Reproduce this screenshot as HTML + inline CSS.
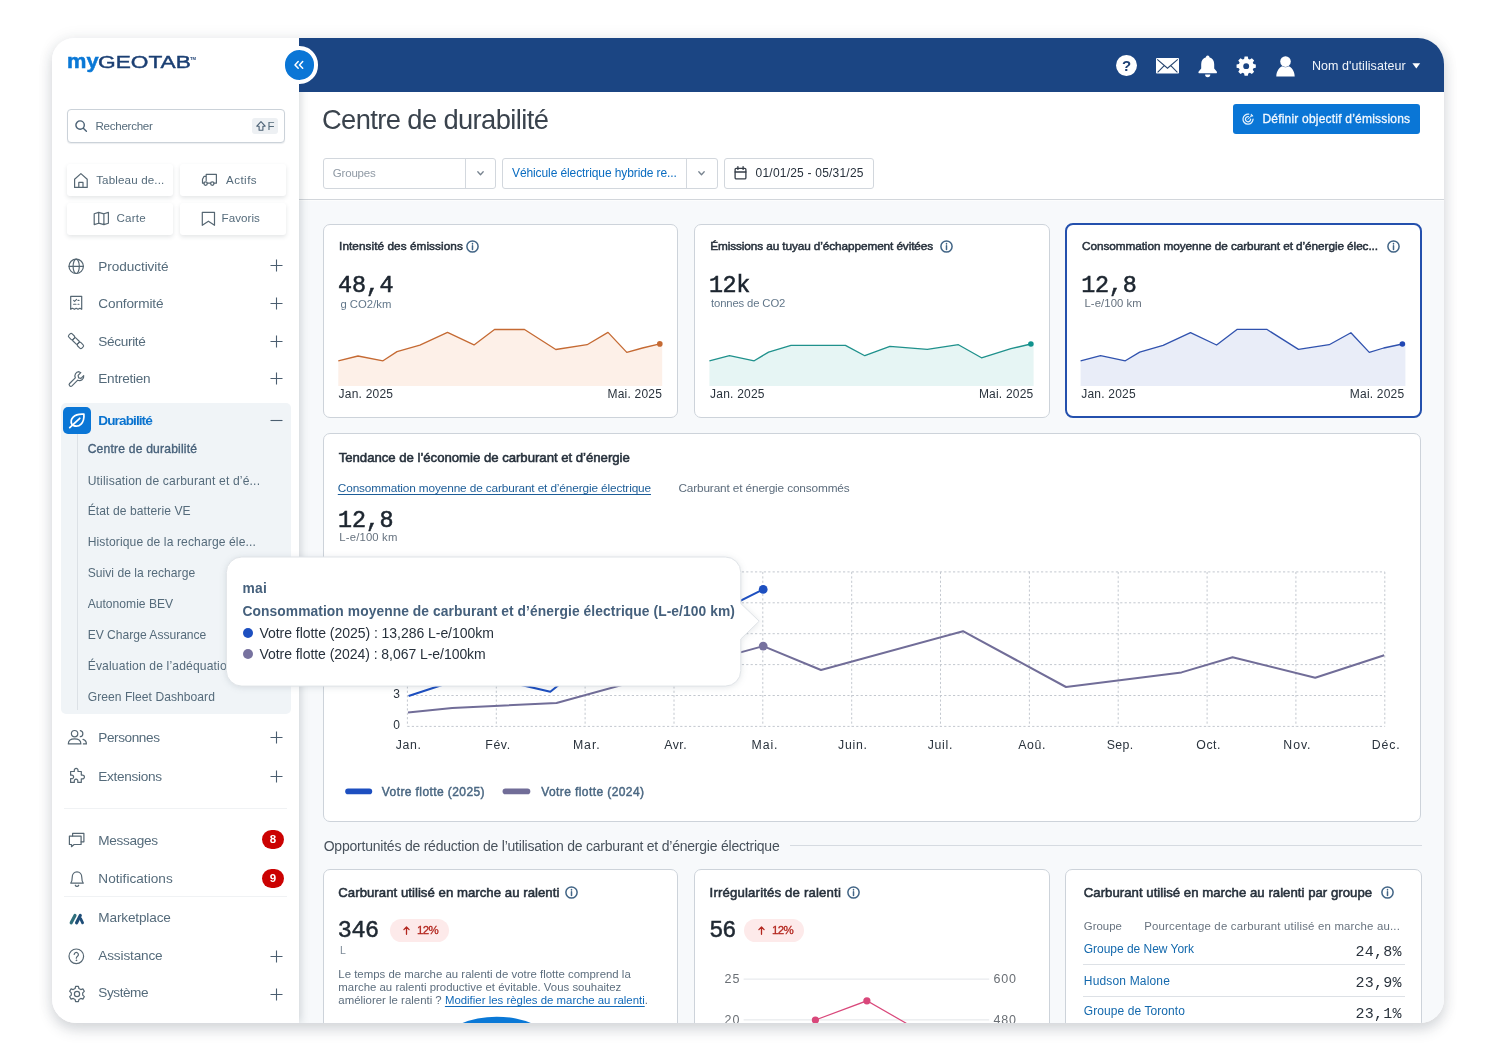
<!DOCTYPE html>
<html lang="fr">
<head>
<meta charset="utf-8">
<title>MyGeotab – Centre de durabilité</title>
<style>
*{box-sizing:border-box;margin:0;padding:0}
html,body{width:1496px;height:1059px;overflow:hidden;background:#fff}
body{font-family:"Liberation Sans",sans-serif;color:#2b3540;position:relative}
.shadow{position:absolute;left:52px;top:38px;width:1392px;height:985px;border-radius:22px 26px 24px 24px;background:#fff;
  box-shadow:0 7px 14px rgba(40,55,70,.17),0 0 16px rgba(40,55,70,.08)}
.frame{will-change:transform;overflow:hidden;position:absolute;left:0;top:0;width:1496px;height:1059px;clip-path:inset(38px 52px 36px 52px round 22px 26px 24px 24px)}
.abs,.t,.box{position:absolute}
.t{white-space:nowrap;line-height:1}
.mono{font-family:"Liberation Mono",monospace}
b,.b{font-weight:700}
svg{position:absolute;overflow:visible}
/* ---------- layout ---------- */
.content{left:299px;top:92px;width:1145px;height:931px;background:#f7f9fb}
.pagehead{left:299px;top:92px;width:1145px;height:108px;background:#fff;border-bottom:1px solid #d2d6db;box-shadow:0 1px 0 rgba(255,255,255,.6)}
.topbar{left:299px;top:38px;width:1145px;height:54px;background:#1b4583}
.sidebar{left:52px;top:38px;width:247px;height:985px;background:#fff;box-shadow:1px 0 9px rgba(40,60,70,.22)}
.c-muted{color:#556b7b}
.c-dark{color:#27313c}
.c-blue{color:#0071c6}
.card{background:#fff;border:1px solid #cdd3da;border-radius:7px}

/* ---------- sidebar ---------- */
.my{font-weight:700;color:#0a78d6;-webkit-text-stroke:.5px #0a78d6}
.geo{color:#1b3f73;-webkit-text-stroke:.4px #1b3f73}
.tm{font-weight:700;color:#1b3f73}
.search{border:1px solid #cbd2d9;border-radius:4px;background:#fff;box-shadow:0 1px 1px rgba(60,80,100,.10)}
.kbd{background:#edf0f3;border-radius:3px}
.qbtn{background:#fff;border-radius:3px;box-shadow:0 2px 4px rgba(50,60,70,.13)}
.ic{fill:none;stroke:#566773;stroke-width:1.2;stroke-linejoin:round;stroke-linecap:round}
.plus{fill:none;stroke:#4b5e70;stroke-width:1.1}
.navopen{background:#f0f4f7;border-radius:5px}
.navline{background:#dce1e6}
.leafbox{background:#0a76d6;border-radius:5px}
.navsep{height:1px;background:#f0f2f4}
.badge{width:22.4px;height:19px;border-radius:9.5px;background:#cb0202;color:#fff;font-weight:700;font-size:11.5px;line-height:19px;text-align:center}

/* ---------- top bar / page header ---------- */
.collapse{width:37.2px;height:37.2px;border-radius:50%;background:#0a76d6;border:4.6px solid #fff}
.title{font-weight:400;color:#3a434d}
.btn{background:#0a76d6;border-radius:3px}
.sel{background:#fff;border:1px solid #d2d7dd;border-radius:3px}
.sel i{position:absolute;top:0;bottom:0;width:1px;background:#d3d8de}
.chev{fill:none;stroke:#76828e;stroke-width:1.3;stroke-linecap:round;stroke-linejoin:round}

/* ---------- cards ---------- */
.ctitle{font-weight:400;color:#27313c;-webkit-text-stroke:.5px #27313c}
.info{fill:none;stroke:#426586;stroke-width:1.5;stroke-linecap:round}
.kpi{color:#1c252f;-webkit-text-stroke:.55px #1c252f}
.unit{color:#62778a}
.axis{color:#2a333d}
.sel3{border:2px solid #2450ad;border-radius:8px}

/* ---------- chart / bottom / tooltip ---------- */
.tab{color:#5c6c7c}
.tab.on{color:#1d5d98;text-decoration:underline;text-decoration-thickness:.8px;text-underline-offset:1.5px}
.unit2{color:#66727f}
.leg{color:#4a6782;-webkit-text-stroke:.45px #4a6782}
.sect{font-weight:400;color:#48525c}
.kpi2{color:#1f2832;-webkit-text-stroke:.5px #1f2832}
.pill{background:#fdeaea;border-radius:11.4px}
.up{fill:none;stroke:#b3261e;stroke-width:1.3;stroke-linecap:round;stroke-linejoin:round}
.pct{color:#b3261e;-webkit-text-stroke:.3px #b3261e}
.para{color:#5d6e7e}
.lnk{color:#1169b8;text-decoration:underline;text-decoration-thickness:.8px;text-underline-offset:1.5px}
.ax2{color:#6a6f75}
.th{color:#68737f}
.grp{color:#1469ad}
.val{color:#2a333d}
.hr{height:1px;background:#dde1e6}
.tt{color:#45607c}
.dot{width:10.2px;height:10.2px;border-radius:50%}
h2.ctitle,h3.ctitle{-webkit-text-stroke:.55px #27313c}
</style>
</head>
<body>
<div class="shadow"></div>
<div class="frame">
  <main class="box content"></main>
  <div class="box pagehead"></div>
  <nav class="box sidebar"></nav>
  <header class="box topbar"></header>
<!-- ================= SIDEBAR ================= -->
<span class="t my" style="left:67.2px;top:51px;font-size:20.6px;transform:scaleX(1.06);transform-origin:0 0">my</span>
<span class="t geo" style="left:98px;top:55px;font-size:15.8px;transform:scaleX(1.435);transform-origin:0 0">GEOTAB</span>
<span class="t tm" style="left:189.9px;top:57px;font-size:4.2px">TM</span>

<div class="box search" style="left:67px;top:109px;width:218px;height:34px"></div>
<svg style="left:73px;top:118px" width="16" height="16" viewBox="0 0 16 16" fill="none" stroke="#4a6175" stroke-width="1.4" stroke-linecap="round"><circle cx="7.1" cy="7.1" r="4.2"/><path d="M10.3 10.3 13.4 13.3"/></svg>
<span class="t c-muted" style="left:95.4px;top:120px;font-size:11.6px;letter-spacing:-0.27px">Rechercher</span>
<div class="box kbd" style="left:252px;top:118px;width:26px;height:16px"></div>
<svg style="left:255.6px;top:121px" width="10" height="10" viewBox="0 0 10 10" fill="none" stroke="#4b6074" stroke-width="1.1" stroke-linejoin="round"><path d="M5 .7 9.2 5.2H6.9V9.3H3.1V5.2H.8Z"/></svg>
<span class="t c-muted" style="left:267.4px;top:121px;font-size:11.5px">F</span>

<div class="box qbtn" style="left:67px;top:164px;width:106px;height:32px"></div>
<div class="box qbtn" style="left:179.5px;top:164px;width:106px;height:32px"></div>
<div class="box qbtn" style="left:67px;top:202.5px;width:106px;height:32px"></div>
<div class="box qbtn" style="left:179.5px;top:202.5px;width:106px;height:32px"></div>
<svg class="ic" style="left:72.8px;top:172px" width="16" height="17" viewBox="0 0 16 17"><path d="M1.6 15.4V7.2L7.9 1.6 14.2 7.2V15.4H1.6ZM5.8 15.4V10.4H10V15.4"/></svg>
<span class="t c-muted" style="left:96.2px;top:174px;font-size:11.6px;letter-spacing:0.14px">Tableau de...</span>
<svg class="ic" style="left:201px;top:173px" width="17" height="14" viewBox="0 0 17 14"><path d="M5.2 1.4H15.4V10.2H12.9M9.6 10.2H6.3M5.2 1.4V7.6M3 10.2H1.5V6.3L3.1 3.3H5.2"/><circle cx="4.6" cy="10.6" r="1.7"/><circle cx="11.3" cy="10.6" r="1.7"/></svg>
<span class="t c-muted" style="left:226px;top:174px;font-size:11.6px;letter-spacing:0.45px">Actifs</span>
<svg class="ic" style="left:92.9px;top:211px" width="17" height="15" viewBox="0 0 17 15"><path d="M1.2 2.8 5.7 1.4 10.9 2.8 15.4 1.4V12.2L10.9 13.6 5.7 12.2 1.2 13.6ZM5.7 1.4V12.2M10.9 2.8V13.6"/></svg>
<span class="t c-muted" style="left:116.5px;top:212px;font-size:11.6px;letter-spacing:0.2px">Carte</span>
<svg class="ic" style="left:201px;top:211px" width="15" height="16" viewBox="0 0 15 16"><path d="M1.3 1.3H13.5V14.3L7.4 10.2 1.3 14.3Z"/></svg>
<span class="t c-muted" style="left:221.6px;top:212px;font-size:11.6px;letter-spacing:0.03px">Favoris</span>

<!-- main navigation -->
<svg class="ic" style="left:68px;top:257.5px" width="17" height="17" viewBox="0 0 17 17"><circle cx="8.2" cy="8.3" r="7.2"/><ellipse cx="8.2" cy="8.3" rx="3.1" ry="7.2"/><path d="M1 8.3H15.4"/></svg>
<span class="t c-muted" style="left:98.3px;top:260px;font-size:13.6px;letter-spacing:-0.07px">Productivité</span>
<svg class="plus" style="left:270px;top:259px" width="13" height="13" viewBox="0 0 13 13"><path d="M6.5 .5V12.5M.5 6.5H12.5"/></svg>

<svg class="ic" style="left:69px;top:295px" width="15" height="16" viewBox="0 0 15 16"><path d="M1.7 1.3H12.7V14.3L10.9 13.3 9 14.3 7.2 13.3 5.4 14.3 3.5 13.3 1.7 14.3Z"/><path d="M4.6 5.4 5.6 6.4 7.6 4.3M9 5.4H10M4.6 9.3H7M9 9.3H10" stroke-width="1.1"/></svg>
<span class="t c-muted" style="left:98.3px;top:297px;font-size:13.6px;letter-spacing:-0.14px">Conformité</span>
<svg class="plus" style="left:270px;top:296.7px" width="13" height="13" viewBox="0 0 13 13"><path d="M6.5 .5V12.5M.5 6.5H12.5"/></svg>

<svg class="ic" style="left:68px;top:333px" width="16" height="16" viewBox="0 0 17 17"><g transform="rotate(-45 8.5 8.5)"><rect x="6" y="-1.3" width="5" height="6.4" rx="1.6"/><rect x="6" y="11.9" width="5" height="6.4" rx="1.6"/><rect x="6.3" y="5.1" width="4.4" height="6.8" rx=".8"/></g></svg>
<span class="t c-muted" style="left:98.3px;top:335px;font-size:13.6px;letter-spacing:-0.33px">Sécurité</span>
<svg class="plus" style="left:270px;top:334.6px" width="13" height="13" viewBox="0 0 13 13"><path d="M6.5 .5V12.5M.5 6.5H12.5"/></svg>

<svg class="ic" style="left:67.5px;top:371px" width="17" height="17" viewBox="0 0 17 17"><path d="M10.9 1.2a4.3 4.3 0 0 0-3.6 6.1L1.6 13a1.7 1.7 0 0 0 2.4 2.4l5.7-5.7a4.3 4.3 0 0 0 6-4.6L13 7.8 10.6 7.3 10.1 4.9 12.8 2.2Z" transform="translate(0 -.5)"/></svg>
<span class="t c-muted" style="left:98.3px;top:372px;font-size:13.6px;letter-spacing:-0.27px">Entretien</span>
<svg class="plus" style="left:270px;top:372.3px" width="13" height="13" viewBox="0 0 13 13"><path d="M6.5 .5V12.5M.5 6.5H12.5"/></svg>

<!-- active section -->
<div class="box navopen" style="left:60.5px;top:403.2px;width:230.5px;height:311.3px"></div>
<div class="box navline" style="left:77px;top:434px;width:1px;height:276px"></div>
<div class="box leafbox" style="left:63.2px;top:406.6px;width:27.6px;height:27.4px"></div>
<svg style="left:67.7px;top:411.3px" width="18.5" height="18.5" viewBox="0 0 17 17" fill="none" stroke="#fff" stroke-width="1.6" stroke-linecap="round" stroke-linejoin="round"><path d="M3.6 12.4C1.3 7.6 5.2 2.2 14.6 2.9 15.3 10.8 10.3 15.9 4.8 13.2"/><path d="M1.6 15.3 10.8 6.7"/></svg>
<span class="t b" style="left:98.3px;top:414px;font-size:13.6px;letter-spacing:-0.91px;color:#0a73cf">Durabilité</span>
<svg class="plus" style="left:270px;top:414px" width="13" height="13" viewBox="0 0 13 13"><path d="M.5 6.5H12.5"/></svg>

<span class="t" style="left:87.7px;top:443px;font-size:12.1px;letter-spacing:0.2px;color:#47617a;-webkit-text-stroke:.35px #47617a">Centre de durabilité</span>
<span class="t c-muted" style="left:87.7px;top:475px;font-size:12.1px;letter-spacing:0.17px">Utilisation de carburant et d’é...</span>
<span class="t c-muted" style="left:87.7px;top:505px;font-size:12.1px;letter-spacing:0.08px">État de batterie VE</span>
<span class="t c-muted" style="left:87.7px;top:536px;font-size:12.1px;letter-spacing:0.11px">Historique de la recharge éle...</span>
<span class="t c-muted" style="left:87.7px;top:567px;font-size:12.1px;letter-spacing:0.03px">Suivi de la recharge</span>
<span class="t c-muted" style="left:87.7px;top:598px;font-size:12.1px;letter-spacing:0.01px">Autonomie BEV</span>
<span class="t c-muted" style="left:87.7px;top:629px;font-size:12.1px;letter-spacing:-0.02px">EV Charge Assurance</span>
<span class="t c-muted" style="left:87.7px;top:660px;font-size:12.1px"><span style="letter-spacing:0.16px">Évaluation de l’adéquatio</span>n d...</span>
<span class="t c-muted" style="left:87.7px;top:691px;font-size:12.1px;letter-spacing:0.04px">Green Fleet Dashboard</span>

<svg class="ic" style="left:66.5px;top:729px" width="21" height="17" viewBox="0 0 21 17"><circle cx="7.6" cy="4.7" r="3.2"/><path d="M1.3 14.9C1.3 11.4 3.9 9.9 7.6 9.9S13.9 11.4 13.9 14.9Z"/><path d="M13.3 1.6a3.1 3.1 0 0 1 0 6.1M16 10.4C18.3 11.1 19.4 12.6 19.4 14.9H16.4"/></svg>
<span class="t c-muted" style="left:98.3px;top:731px;font-size:13.6px;letter-spacing:-0.42px">Personnes</span>
<svg class="plus" style="left:270px;top:731px" width="13" height="13" viewBox="0 0 13 13"><path d="M6.5 .5V12.5M.5 6.5H12.5"/></svg>

<svg class="ic" style="left:67.8px;top:767px" width="18" height="17" viewBox="0 0 18 17"><path d="M6.3 3.7a1.9 1.9 0 1 1 3.7 0V4.5H13.3V8.1H14.1a1.9 1.9 0 1 1 0 3.7H13.3V15.4H9.8V14.4a1.8 1.8 0 1 0-3.5 0V15.4H2.6V11.7H3.4a1.8 1.8 0 1 0 0-3.5H2.6V4.5H6.3Z"/></svg>
<span class="t c-muted" style="left:98.3px;top:770px;font-size:13.6px;letter-spacing:-0.3px">Extensions</span>
<svg class="plus" style="left:270px;top:770px" width="13" height="13" viewBox="0 0 13 13"><path d="M6.5 .5V12.5M.5 6.5H12.5"/></svg>

<div class="box navsep" style="left:64px;top:808px;width:223px"></div>

<svg class="ic" style="left:68.1px;top:832px" width="18" height="16" viewBox="0 0 18 16"><path d="M4.6 4.1V1.4H15.9V9.8H13.1"/><path d="M1.4 4.1H13.1V12.5H6.1L3.5 14.7V12.5H1.4Z"/></svg>
<span class="t c-muted" style="left:98.3px;top:834px;font-size:13.6px;letter-spacing:-0.32px">Messages</span>
<div class="box badge" style="left:261.7px;top:830px">8</div>

<svg class="ic" style="left:69px;top:870px" width="16" height="17" viewBox="0 0 16 17"><path d="M1.7 13.1C3.1 11.7 3.2 10.2 3.2 7.4 3.2 4.2 5.3 1.9 8 1.9S12.8 4.2 12.8 7.4C12.8 10.2 12.9 11.7 14.3 13.1Z"/><path d="M6.3 15.2a1.8 1.8 0 0 0 3.4 0"/></svg>
<span class="t c-muted" style="left:98.3px;top:872px;font-size:13.6px;letter-spacing:0.03px">Notifications</span>
<div class="box badge" style="left:261.7px;top:868.6px">9</div>

<div class="box navsep" style="left:64px;top:896px;width:223px"></div>

<svg style="left:69px;top:912.6px" width="16" height="12" viewBox="0 0 16 12" fill="none" stroke-linecap="round" stroke-width="3.2"><path d="M2.2 9.8 6 2.4" stroke="#2f6f7c"/><path d="M7.6 9.8 11.3 2.4" stroke="#1f4e78"/><path d="M11.6 5.6 13.6 9.8" stroke="#1f4e78" stroke-width="2.8"/></svg>
<span class="t c-muted" style="left:98.3px;top:911px;font-size:13.6px;letter-spacing:-0.15px">Marketplace</span>

<svg class="ic" style="left:68.4px;top:947.6px" width="17" height="17" viewBox="0 0 17 17"><circle cx="8.3" cy="8.3" r="7.3"/><path d="M6.2 6.5a2.1 2.1 0 1 1 3.3 1.8C8.7 8.9 8.3 9.3 8.3 10.2" stroke-width="1.2"/><circle cx="8.3" cy="12.3" r=".4" stroke-width="1"/></svg>
<span class="t c-muted" style="left:98.3px;top:949px;font-size:13.6px;letter-spacing:-0.15px">Assistance</span>
<svg class="plus" style="left:270px;top:949.5px" width="13" height="13" viewBox="0 0 13 13"><path d="M6.5 .5V12.5M.5 6.5H12.5"/></svg>

<svg class="ic" style="left:67.8px;top:984.8px" width="18" height="18" viewBox="0 0 18 18"><path d="M7.6 1.3H10.4L10.9 3.5 12.8 4.6 14.9 3.9 16.3 6.3 14.7 7.9V10.1L16.3 11.7 14.9 14.1 12.8 13.4 10.9 14.5 10.4 16.7H7.6L7.1 14.5 5.2 13.4 3.1 14.1 1.7 11.7 3.3 10.1V7.9L1.7 6.3 3.1 3.9 5.2 4.6 7.1 3.5Z"/><circle cx="9" cy="9" r="2.6"/></svg>
<span class="t c-muted" style="left:98.3px;top:986px;font-size:13.6px;letter-spacing:-0.44px">Système</span>
<svg class="plus" style="left:270px;top:987.5px" width="13" height="13" viewBox="0 0 13 13"><path d="M6.5 .5V12.5M.5 6.5H12.5"/></svg>

<!-- ================= TOP BAR ================= -->
<div class="box collapse" style="left:281.3px;top:46.4px"></div>
<svg style="left:293px;top:60px" width="12" height="10" viewBox="0 0 12 10" fill="none" stroke="#fff" stroke-width="1.5" stroke-linecap="round" stroke-linejoin="round"><path d="M5.2 1.5 2 4.9 5.2 8.3M9.7 1.5 6.5 4.9 9.7 8.3"/></svg>
<div class="box" style="left:1116px;top:55.3px;width:20.8px;height:20.8px;border-radius:50%;background:#fff"></div>
<span class="t b" style="left:1122px;top:58px;font-size:15px;color:#1b3f73">?</span>
<svg style="left:1156px;top:58px" width="23" height="16" viewBox="0 0 23 16"><rect x="0" y="0" width="23" height="15.5" rx="1" fill="#fff"/><path d="M1.2 1.3 11.5 10.2 21.8 1.3M1.6 14.3 8.2 7.7M21.4 14.3 14.8 7.7" fill="none" stroke="#27456f" stroke-width="1.1"/></svg>
<svg style="left:1198px;top:54.5px" width="20" height="23" viewBox="0 0 20 23" fill="#fff"><path d="M9.7 .4a1.7 1.7 0 0 1 1.7 1.9C14.5 3.2 16.2 5.9 16.2 9.3V13.6L18.7 16.6A1 1 0 0 1 18 18.3H1.4A1 1 0 0 1 .7 16.6L3.2 13.6V9.3C3.2 5.9 4.9 3.2 8 2.3A1.7 1.7 0 0 1 9.7 .4Z"/><path d="M7.1 19.6H12.3A2.6 2.6 0 0 1 7.1 19.6Z"/></svg>
<svg style="left:1236.2px;top:55.6px" width="20.4" height="20.4" viewBox="-10.2 -10.2 20.4 20.4"><path fill="#fff" fill-rule="evenodd" d="M-1.9-10.1H1.9L2.5-7.3 4.3-6.5 6.7-8.1 9.4-5.4 7.8-3 8.6-1.2 11.4-.6V3.2L8.6 3.8 7.8 5.6 9.4 8 6.7 10.7 4.3 9.1 2.5 9.9 1.9 12.7H-1.9L-2.5 9.9-4.3 9.1-6.7 10.7-9.4 8-7.8 5.6-8.6 3.8-11.4 3.2V-.6L-8.6-1.2-7.8-3-9.4-5.4-6.7-8.1-4.3-6.5-2.5-7.3ZM0-2.2A3.5 3.5 0 1 0 0 4.8 3.5 3.5 0 1 0 0-2.2Z" transform="translate(0 -1.15) scale(.845)"/></svg>
<svg style="left:1275.5px;top:55.8px" width="19" height="21" viewBox="0 0 19 21" fill="#fff"><circle cx="9.5" cy="5.6" r="5.3"/><path d="M.3 20.4C.3 15.3 3.4 11.4 6.2 10.3 7.3 10.9 8.3 11.2 9.5 11.2S11.7 10.9 12.8 10.3C15.6 11.4 18.7 15.3 18.7 20.4Z"/></svg>
<span class="t" style="left:1312px;top:60px;font-size:12.5px;letter-spacing:0.06px;color:#f2f6fb">Nom d'utilisateur</span>
<svg style="left:1412.3px;top:63px" width="9" height="6" viewBox="0 0 9 6"><path d="M.4 .3H8.2L4.3 5.6Z" fill="#fff"/></svg>

<!-- ================= PAGE HEADER ================= -->
<h1 class="t title" style="left:322px;top:106px;font-size:27.3px;letter-spacing:-0.6px">Centre de durabilité</h1>
<div class="box btn" style="left:1233px;top:104.2px;width:187.4px;height:29.8px"></div>
<svg style="left:1241.9px;top:113.4px" width="12.6" height="12.6" viewBox="0 0 14 14" fill="none" stroke="#e6f2fd" stroke-width="1.4" stroke-linecap="round"><path d="M12.3 6.8a5.6 5.6 0 1 1-4.8-5.5"/><path d="M9.6 6.8a2.9 2.9 0 1 1-2.5-2.8"/><path d="M6.7 6.9 10.3 3.3M10.3 3.3V1.3L12.3 3.3 10.3 3.3" stroke-width="1.1"/></svg>
<span class="t" style="left:1262.4px;top:113px;font-size:12px;letter-spacing:0.21px;color:#f2f8ff;-webkit-text-stroke:.3px #f2f8ff">Définir objectif d’émissions</span>

<div class="box sel" style="left:323px;top:158px;width:173px;height:31px"><i style="left:141px"></i></div>
<span class="t" style="left:332.7px;top:168px;font-size:11.5px;letter-spacing:-0.16px;color:#8f99a4">Groupes</span>
<svg class="chev" style="left:476.8px;top:171px" width="7" height="5" viewBox="0 0 7 5"><path d="M.8 .8 3.5 3.7 6.2 .8"/></svg>
<div class="box sel" style="left:502px;top:158px;width:216px;height:31px"><i style="left:183px"></i></div>
<span class="t" style="left:512px;top:167px;font-size:12px;letter-spacing:-0.1px;color:#0a6cc0">Véhicule électrique hybride re...</span>
<svg class="chev" style="left:698.2px;top:171px" width="7" height="5" viewBox="0 0 7 5"><path d="M.8 .8 3.5 3.7 6.2 .8"/></svg>
<div class="box sel" style="left:724px;top:158px;width:150px;height:31px"></div>
<svg style="left:733.8px;top:166.2px" width="13" height="14" viewBox="0 0 13 14" fill="none" stroke="#353d47" stroke-width="1.3" stroke-linejoin="round"><rect x="1.1" y="2.4" width="10.8" height="10.5" rx="1.2"/><path d="M1.1 6H11.9M3.9 .600V3.4M9.1 .600V3.4" stroke-linecap="round"/></svg>
<span class="t c-dark" style="left:755.6px;top:167px;font-size:12px;letter-spacing:0.21px">01/01/25 - 05/31/25</span>

<!--PAGEHEAD-->
<!-- ================= KPI CARDS ================= -->
<section class="box card" style="left:323px;top:224px;width:355px;height:194px"></section>
<span class="t ctitle" style="left:339.1px;top:241px;font-size:11.8px;letter-spacing:0.05px">Intensité des émissions</span>
<svg class="info" style="left:465.6px;top:240px" width="13" height="13" viewBox="0 0 13 13"><circle cx="6.5" cy="6.5" r="5.6"/><path d="M6.5 5.7V9.4M6.5 3.6V3.9"/></svg>
<span class="t mono kpi" style="left:338.1px;top:275px;font-size:23.4px;letter-spacing:-0.2px">48,4</span>
<span class="t unit" style="left:340.4px;top:299px;font-size:11.3px;letter-spacing:0.02px">g CO2/km</span>
<svg style="left:0;top:0" width="1496" height="1059" viewBox="0 0 1496 1059">
  <path d="M338.3 360.8 358 356 383 360.8 397 351.6 419.9 345.1 447.5 332.4 474 344.9 494.5 329.5 524.5 329.5 555.8 349.5 587.1 344.7 608 332.4 626.8 352.4 642.5 348 659.8 343.9H662.2V386H338.3Z" fill="#fdf0e8"/>
  <path d="M338.3 360.8 358 356 383 360.8 397 351.6 419.9 345.1 447.5 332.4 474 344.9 494.5 329.5 524.5 329.5 555.8 349.5 587.1 344.7 608 332.4 626.8 352.4 642.5 348 659.8 343.9" fill="none" stroke="#c56a33" stroke-width="1.3" stroke-linejoin="round"/>
  <circle cx="659.8" cy="343.9" r="2.8" fill="#c56a33"/>
</svg>
<span class="t axis" style="left:338.6px;top:388px;font-size:12px;letter-spacing:0.21px">Jan. 2025</span>
<span class="t axis" style="left:607.5px;top:388px;font-size:12px;letter-spacing:0.21px">Mai. 2025</span>

<section class="box card" style="left:694px;top:224px;width:356px;height:194px"></section>
<span class="t ctitle" style="left:710.2px;top:241px;font-size:11.8px;letter-spacing:-0.1px">Émissions au tuyau d’échappement évitées</span>
<svg class="info" style="left:940.2px;top:240px" width="13" height="13" viewBox="0 0 13 13"><circle cx="6.5" cy="6.5" r="5.6"/><path d="M6.5 5.7V9.4M6.5 3.6V3.9"/></svg>
<span class="t mono kpi" style="left:708.9px;top:275px;font-size:23.4px;letter-spacing:-0.39px">12k</span>
<span class="t unit" style="left:711px;top:298px;font-size:11.3px;letter-spacing:-0.14px">tonnes de CO2</span>
<svg style="left:0;top:0" width="1496" height="1059" viewBox="0 0 1496 1059">
  <path d="M709.4 360.8 729.5 355.7 754.2 360.8 768.6 352.1 791 345.4H845.4L864.8 355.7 889.9 346.4 927.3 349.4 958.4 344.7 981.5 357.8 1010.9 348.7 1030.9 344H1033.6V386H709.4Z" fill="#e6f5f4"/>
  <path d="M709.4 360.8 729.5 355.7 754.2 360.8 768.6 352.1 791 345.4H845.4L864.8 355.7 889.9 346.4 927.3 349.4 958.4 344.7 981.5 357.8 1010.9 348.7 1030.9 344" fill="none" stroke="#1f918c" stroke-width="1.3" stroke-linejoin="round"/>
  <circle cx="1030.9" cy="344" r="2.8" fill="#11938e"/>
</svg>
<span class="t axis" style="left:710.1px;top:388px;font-size:12px;letter-spacing:0.21px">Jan. 2025</span>
<span class="t axis" style="left:978.9px;top:388px;font-size:12px;letter-spacing:0.21px">Mai. 2025</span>

<section class="box card sel3" style="left:1065px;top:223px;width:357px;height:195px"></section>
<span class="t ctitle" style="left:1082px;top:241px;font-size:11.8px;letter-spacing:-0.08px">Consommation moyenne de carburant et d’énergie élec...</span>
<svg class="info" style="left:1387px;top:240px" width="13" height="13" viewBox="0 0 13 13"><circle cx="6.5" cy="6.5" r="5.6"/><path d="M6.5 5.7V9.4M6.5 3.6V3.9"/></svg>
<span class="t mono kpi" style="left:1081.2px;top:275px;font-size:23.4px;letter-spacing:-0.2px">12,8</span>
<span class="t unit2" style="left:1084.5px;top:298px;font-size:11.3px;letter-spacing:0.08px">L-e/100 km</span>
<svg style="left:0;top:0" width="1496" height="1059" viewBox="0 0 1496 1059">
  <path d="M1080.6 360.8 1100.6 355.7 1125.3 360.8 1139.7 352.1 1163.1 345.4 1190.5 332.7 1216.6 345 1237.3 329.3H1266.7L1298.5 349.4 1329.2 344.7 1350.9 332.7 1369.3 352.4 1383.7 348 1402.4 344H1405.4V386H1080.6Z" fill="#e9edf8"/>
  <path d="M1080.6 360.8 1100.6 355.7 1125.3 360.8 1139.7 352.1 1163.1 345.4 1190.5 332.7 1216.6 345 1237.3 329.3H1266.7L1298.5 349.4 1329.2 344.7 1350.9 332.7 1369.3 352.4 1383.7 348 1402.4 344" fill="none" stroke="#3052ae" stroke-width="1.3" stroke-linejoin="round"/>
  <circle cx="1402.4" cy="344" r="2.8" fill="#2248b4"/>
</svg>
<span class="t axis" style="left:1081.2px;top:388px;font-size:12px;letter-spacing:0.21px">Jan. 2025</span>
<span class="t axis" style="left:1349.8px;top:388px;font-size:12px;letter-spacing:0.21px">Mai. 2025</span>

<!-- ================= TREND CHART ================= -->
<section class="box card" style="left:323px;top:433px;width:1098px;height:389px"></section>
<h2 class="t ctitle" style="left:338.7px;top:451px;font-size:13.2px;letter-spacing:-0.03px">Tendance de l’économie de carburant et d’énergie</h2>
<a class="t tab on" style="left:337.8px;top:483px;font-size:11.8px;letter-spacing:-0.12px">Consommation moyenne de carburant et d’énergie électrique</a>
<a class="t tab" style="left:678.4px;top:483px;font-size:11.8px;letter-spacing:-0.13px">Carburant et énergie consommés</a>
<span class="t mono kpi" style="left:338.1px;top:510px;font-size:23.4px;letter-spacing:-0.2px">12,8</span>
<span class="t unit2" style="left:339.3px;top:532px;font-size:11.3px;letter-spacing:0.17px">L-e/100 km</span>
<svg style="left:0;top:0" width="1496" height="1059" viewBox="0 0 1496 1059">
  <g fill="none" stroke="#c3c8cf" stroke-width="1" stroke-dasharray="2.2 2.2">
    <path d="M407.4 571.9H1384.8M407.4 602.8H1384.8M407.4 633.7H1384.8M407.4 664.6H1384.8M407.4 695.5H1384.8M407.4 726.4H1384.8"/>
    <path d="M407.4 571.9V726.4M496.3 571.9V726.4M585.1 571.9V726.4M674 571.9V726.4M762.8 571.9V726.4M851.7 571.9V726.4M940.5 571.9V726.4M1029.4 571.9V726.4M1118.2 571.9V726.4M1207.1 571.9V726.4M1295.9 571.9V726.4M1384.8 571.9V726.4"/>
  </g>
  <path d="M408 712.4 452.2 707.9 556.5 703 763.2 646.1 821 670 963 631.2 1066 687 1181.5 672.4 1232.6 657.3 1315.2 677.7 1384.2 655.3" fill="none" stroke="#716d98" stroke-width="2" stroke-linejoin="round"/>
  <path d="M408.6 696 452 681.7 497 679.3 550.3 691.8 585 664 674 634 763.2 589.4" fill="none" stroke="#1d4fc0" stroke-width="2" stroke-linejoin="round"/>
  <circle cx="763.2" cy="646.1" r="4.4" fill="#77729f"/>
  <circle cx="763.2" cy="589.4" r="4.4" fill="#1d4fc0"/>
  <path d="M348 791.4H369.4" stroke="#1d4fc0" stroke-width="5.6" stroke-linecap="round"/>
  <path d="M505.4 791.4H527.5" stroke="#716d98" stroke-width="5.6" stroke-linecap="round"/>
</svg>
<span class="t axis" style="left:393.3px;top:688px;font-size:12px">3</span>
<span class="t axis" style="left:393.3px;top:719px;font-size:12px">0</span>
<span class="t axis" style="left:395.85px;top:739px;font-size:12.3px;letter-spacing:0.62px">Jan.</span>
<span class="t axis" style="left:485.35px;top:739px;font-size:12.3px;letter-spacing:0.57px">Fév.</span>
<span class="t axis" style="left:572.95px;top:739px;font-size:12.3px;letter-spacing:0.93px">Mar.</span>
<span class="t axis" style="left:664.2px;top:739px;font-size:12.3px;letter-spacing:0.49px">Avr.</span>
<span class="t axis" style="left:751.55px;top:739px;font-size:12.3px;letter-spacing:0.9px">Mai.</span>
<span class="t axis" style="left:838.1px;top:739px;font-size:12.3px;letter-spacing:0.71px">Juin.</span>
<span class="t axis" style="left:927.7px;top:739px;font-size:12.3px;letter-spacing:0.69px">Juil.</span>
<span class="t axis" style="left:1018.25px;top:739px;font-size:12.3px;letter-spacing:0.61px">Aoû.</span>
<span class="t axis" style="left:1106.8px;top:739px;font-size:12.3px;letter-spacing:0.37px">Sep.</span>
<span class="t axis" style="left:1196.35px;top:739px;font-size:12.3px;letter-spacing:0.52px">Oct.</span>
<span class="t axis" style="left:1283.35px;top:739px;font-size:12.3px;letter-spacing:0.92px">Nov.</span>
<span class="t axis" style="left:1371.8px;top:739px;font-size:12.3px;letter-spacing:0.84px">Déc.</span>
<span class="t leg" style="left:381.8px;top:786px;font-size:12px;letter-spacing:0.41px">Votre flotte (2025)</span>
<span class="t leg" style="left:541.2px;top:786px;font-size:12px;letter-spacing:0.41px">Votre flotte (2024)</span>

<!-- ================= OPPORTUNITIES ================= -->
<h2 class="t sect" style="left:323.7px;top:839px;font-size:14px;letter-spacing:-0.22px">Opportunités de réduction de l’utilisation de carburant et d’énergie électrique</h2>
<div class="box" style="left:790px;top:845px;width:631.5px;height:1px;background:#d6dbe1"></div>

<section class="box card" style="left:323px;top:869px;width:355px;height:170px"></section>
<h3 class="t ctitle" style="left:338.3px;top:886px;font-size:13.2px;letter-spacing:0.03px">Carburant utilisé en marche au ralenti</h3>
<svg class="info" style="left:565.2px;top:886.2px" width="13" height="13" viewBox="0 0 13 13"><circle cx="6.5" cy="6.5" r="5.6"/><path d="M6.5 5.7V9.4M6.5 3.6V3.9"/></svg>
<span class="t mono kpi2" style="left:337.8px;top:920px;font-size:23.4px;letter-spacing:-0.44px">346</span>
<div class="box pill" style="left:389.6px;top:919px;width:59.6px;height:22.8px"></div>
<svg class="up" style="left:403.3px;top:925.6px" width="7" height="9" viewBox="0 0 7 9"><path d="M3.5 8.3V1M.9 3.6 3.5 1 6.1 3.6"/></svg>
<span class="t pct" style="left:417px;top:925px;font-size:11.5px;letter-spacing:-0.7px">12%</span>
<span class="t" style="left:340px;top:945px;font-size:10.5px;color:#7d8b98">L</span>
<p class="t para" style="left:338.3px;top:969px;font-size:11.4px;letter-spacing:0.01px">Le temps de marche au ralenti de votre flotte comprend la</p>
<p class="t para" style="left:338.3px;top:982px;font-size:11.4px;letter-spacing:0.01px">marche au ralenti productive et évitable. Vous souhaitez</p>
<p class="t para" style="left:338.3px;top:995px;font-size:11.4px;letter-spacing:0.01px">améliorer le ralenti ? <a class="lnk">Modifier les règles de marche au ralenti</a>.</p>
<svg style="left:0;top:0" width="1496" height="1059" viewBox="0 0 1496 1059"><circle cx="496.7" cy="1114.3" r="97.6" fill="#0a78d6"/></svg>

<section class="box card" style="left:694px;top:869px;width:356px;height:170px"></section>
<h3 class="t ctitle" style="left:709.6px;top:886px;font-size:13.2px;letter-spacing:0.16px">Irrégularités de ralenti</h3>
<svg class="info" style="left:847px;top:886.2px" width="13" height="13" viewBox="0 0 13 13"><circle cx="6.5" cy="6.5" r="5.6"/><path d="M6.5 5.7V9.4M6.5 3.6V3.9"/></svg>
<span class="t mono kpi2" style="left:709.2px;top:920px;font-size:23.4px;letter-spacing:-0.94px">56</span>
<div class="box pill" style="left:744.3px;top:919px;width:60px;height:22.8px"></div>
<svg class="up" style="left:758.3px;top:925.6px" width="7" height="9" viewBox="0 0 7 9"><path d="M3.5 8.3V1M.9 3.6 3.5 1 6.1 3.6"/></svg>
<span class="t pct" style="left:772px;top:925px;font-size:11.5px;letter-spacing:-0.7px">12%</span>
<svg style="left:0;top:0" width="1496" height="1059" viewBox="0 0 1496 1059">
  <path d="M743.6 979.1H989.2M743.6 1019.9H989.2" stroke="#e2e5e9" stroke-width="1" fill="none"/>
  <path d="M815.4 1020 866.9 1000.8 905.7 1023 930 1040" fill="none" stroke="#d9487b" stroke-width="1.3"/>
  <circle cx="815.4" cy="1020" r="3.6" fill="#d9487b"/><circle cx="866.9" cy="1000.8" r="3.6" fill="#d9487b"/>
</svg>
<span class="t ax2" style="left:724.6px;top:973px;font-size:12.5px;letter-spacing:0.85px">25</span>
<span class="t ax2" style="left:724.6px;top:1014px;font-size:12.5px;letter-spacing:0.85px">20</span>
<span class="t ax2" style="left:993.5px;top:973px;font-size:12.5px;letter-spacing:0.85px">600</span>
<span class="t ax2" style="left:993.5px;top:1014px;font-size:12.5px;letter-spacing:0.85px">480</span>

<section class="box card" style="left:1065px;top:869px;width:357px;height:170px"></section>
<h3 class="t ctitle" style="left:1083.8px;top:886px;font-size:13.2px;letter-spacing:0.02px">Carburant utilisé en marche au ralenti par groupe</h3>
<svg class="info" style="left:1381px;top:886.2px" width="13" height="13" viewBox="0 0 13 13"><circle cx="6.5" cy="6.5" r="5.6"/><path d="M6.5 5.7V9.4M6.5 3.6V3.9"/></svg>
<span class="t th" style="left:1083.8px;top:921px;font-size:11.4px;letter-spacing:0.03px">Groupe</span>
<span class="t th" style="left:1144.2px;top:921px;font-size:11.4px;letter-spacing:0.2px">Pourcentage de carburant utilisé en marche au...</span>
<a class="t grp" style="left:1083.8px;top:943px;font-size:12px;letter-spacing:-0.03px">Groupe de New York</a>
<span class="t mono val" style="left:1355.4px;top:945px;font-size:15px;letter-spacing:0.25px">24,8%</span>
<div class="box hr" style="left:1082.7px;top:963.5px;width:322.5px"></div>
<a class="t grp" style="left:1083.8px;top:975px;font-size:12px;letter-spacing:0.17px">Hudson Malone</a>
<span class="t mono val" style="left:1355.4px;top:976px;font-size:15px;letter-spacing:0.25px">23,9%</span>
<div class="box hr" style="left:1082.7px;top:995.7px;width:322.5px"></div>
<a class="t grp" style="left:1083.8px;top:1005px;font-size:12px;letter-spacing:0.08px">Groupe de Toronto</a>
<span class="t mono val" style="left:1355.4px;top:1007px;font-size:15px;letter-spacing:0.25px">23,1%</span>

<!-- ================= CHART TOOLTIP ================= -->
<svg style="left:0;top:0;filter:drop-shadow(0 1px 3px rgba(40,60,80,.13))" width="1496" height="1059" viewBox="0 0 1496 1059">
  <path d="M241.8 557H725.3A15.5 15.5 0 0 1 740.8 572.5V603.5L759.2 621.2 740.8 639V670.6A15.5 15.5 0 0 1 725.3 686.1H241.8A15.5 15.5 0 0 1 226.3 670.6V572.5A15.5 15.5 0 0 1 241.8 557Z" fill="#fff" stroke="#dfe3e7" stroke-width="1"/>
</svg>
<span class="t tt b" style="left:242.5px;top:582px;font-size:13.8px;letter-spacing:0.23px">mai</span>
<span class="t tt b" style="left:242.5px;top:605px;font-size:13.8px;letter-spacing:0.08px">Consommation moyenne de carburant et d’énergie électrique (L-e/100 km)</span>
<div class="box dot" style="left:242.7px;top:627.7px;background:#1d4fc0"></div>
<span class="t c-dark" style="left:259.5px;top:626px;font-size:14px;letter-spacing:-0.04px">Votre flotte (2025) : 13,286 L-e/100km</span>
<div class="box dot" style="left:242.7px;top:648.8px;background:#77729f"></div>
<span class="t c-dark" style="left:259.5px;top:647px;font-size:14px;letter-spacing:-0.05px">Votre flotte (2024) : 8,067 L-e/100km</span>

</div>
</body>
</html>
